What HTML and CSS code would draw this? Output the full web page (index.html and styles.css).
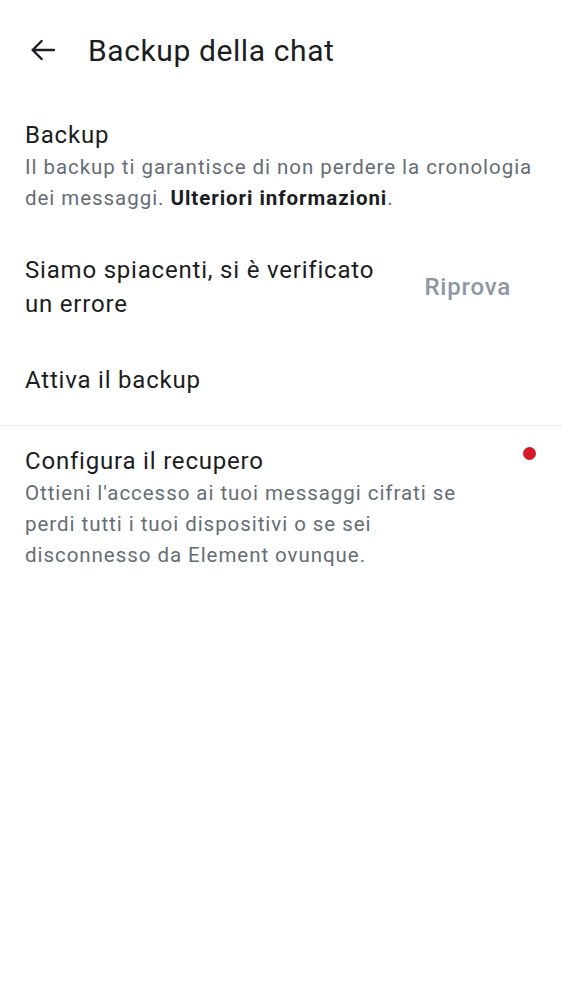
FILE: index.html
```html
<!DOCTYPE html>
<html lang="it">
<head>
<meta charset="utf-8">
<link rel="stylesheet" href="styles.css">
</head>
<body>
<header class="topbar">
  <button class="back" aria-label="Indietro">
    <svg width="24" height="24" viewBox="0 0 24 24"><path d="M23 12H1.8M10.6 3L1.6 12l9 9" fill="none" stroke="#1b1d22" stroke-width="2.4" stroke-linecap="round" stroke-linejoin="round"/></svg>
  </button>
  <h1 class="title">Backup della chat</h1>
</header>
<main>
  <section class="row row-backup">
    <div class="row-text">
      <div class="row-title">Backup</div>
      <div class="row-sub">Il backup ti garantisce di non perdere la cronologia dei messaggi. <b>Ulteriori informazioni</b>.</div>
    </div>
  </section>
  <section class="row row-error">
    <div class="row-text narrow">
      <div class="row-title">Siamo spiacenti, si è verificato un errore</div>
    </div>
    <button class="retry">Riprova</button>
  </section>
  <section class="row row-enable">
    <div class="row-title">Attiva il backup</div>
  </section>
  <hr class="divider">
  <section class="row row-recovery">
    <div class="row-text narrow2">
      <div class="row-title">Configura il recupero</div>
      <div class="row-sub">Ottieni l'accesso ai tuoi messaggi cifrati se perdi tutti i tuoi dispositivi o se sei disconnesso da Element ovunque.</div>
    </div>
    <span class="dot"></span>
  </section>
</main>
</body>
</html>
```
FILE: styles.css
```css
html, body {
  margin: 0;
  padding: 0;
  background: #ffffff;
}
body {
  font-family: Roboto, "Noto Sans", sans-serif;
  color: #1b1d22;
  width: 562px;
}
.topbar {
  height: 100px;
  display: flex;
  align-items: center;
  padding-left: 31px;
  box-sizing: border-box;
}
.back {
  border: 0;
  background: none;
  padding: 0;
  width: 24px;
  height: 24px;
  display: flex;
  margin-right: 33px;
}
.title {
  margin: 0;
  font-size: 30px;
  font-weight: 400;
  letter-spacing: 0.6px;
}
.row {
  display: flex;
  align-items: center;
  padding: 0 25px;
  position: relative;
}
.row-text {
  flex: 1;
}
.narrow {
  max-width: 375px;
}
.narrow2 {
  max-width: 455px;
}
.row-title {
  font-size: 24px;
  line-height: 34px;
  letter-spacing: 0.8px;
}
.row-sub {
  font-size: 20.5px;
  line-height: 31px;
  letter-spacing: 0.95px;
  color: #656d77;
}
.row-sub b {
  color: #1b1d22;
  font-weight: 700;
}
.row-backup {
  padding-top: 18px;
  padding-bottom: 20px;
}
.row-error {
  padding-top: 19px;
  padding-bottom: 21px;
}
.row-enable {
  padding-top: 21px;
  padding-bottom: 28px;
}
.row-recovery {
  padding-top: 18px;
  align-items: flex-start;
}
.retry {
  margin-left: auto;
  border: 0;
  background: none;
  font-family: Roboto, sans-serif;
  font-size: 24px;
  font-weight: 500;
  letter-spacing: 0.8px;
  color: #8d97a5;
  padding: 0 26px 0 0;
}
.divider {
  margin: 0;
  border: 0;
  height: 1px;
  background: #e9ebee;
}
.dot {
  position: absolute;
  right: 26px;
  top: 21px;
  width: 13px;
  height: 13px;
  border-radius: 50%;
  background: #d51928;
}
```
